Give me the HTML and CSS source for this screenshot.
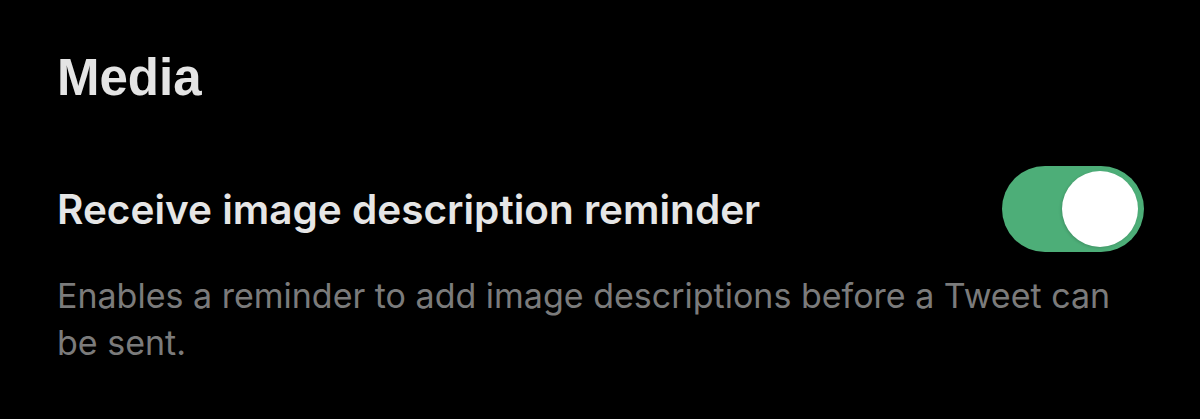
FILE: index.html
```html
<!DOCTYPE html>
<html lang="en">
<head>
  <meta charset="UTF-8" />
  <meta name="viewport" content="width=device-width, initial-scale=1.0"/>
  <title>Media settings</title>
  <link rel="stylesheet" href="styles.css">
</head>
<body>

  <div class="section">
    <h1>Media</h1>

    <div class="setting">
      <div class="row">
        <span class="label">Receive image description reminder</span>
        <div class="toggle on">
          <div class="knob"></div>
        </div>
      </div>
      <p class="hint">Enables a reminder to add image descriptions before a Tweet can be sent.</p>
    </div>
  </div>

</body>
</html>
```

FILE: styles.css
```css
body {
  margin: 0;
  background-color: #000;
  color: #e7e7e7;
  font-family: Inter, "Noto Sans", sans-serif;
}

.section {
  padding: 48px 56px 0 57px;
}

h1 {
  font-family: "Liberation Sans", Arial, sans-serif;
  font-size: 51px;
  font-weight: bold;
  margin: 0;
  line-height: 60px;
  color: #e4e4e4;
}

.setting {
  margin-top: 58px;
}

.row {
  display: flex;
  justify-content: space-between;
  align-items: center;
}

.label {
  font-size: 40.5px;
  font-weight: 600;
  color: #e6e6e6;
}

.toggle {
  width: 142px;
  height: 86px;
  border-radius: 43px;
  background-color: #4dae78;
  display: flex;
  align-items: center;
  padding: 0 6px;
  box-sizing: border-box;
}

.toggle.on {
  justify-content: flex-end;
}

.knob {
  width: 76px;
  height: 76px;
  border-radius: 50%;
  background: #fff;
  box-shadow: -1px 1px 3px rgba(0,0,0,0.15);
}

.hint {
  margin: 20px 0 0;
  font-size: 34px;
  line-height: 47px;
  color: #7b7b7b;
  max-width: 1075px;
}
```
